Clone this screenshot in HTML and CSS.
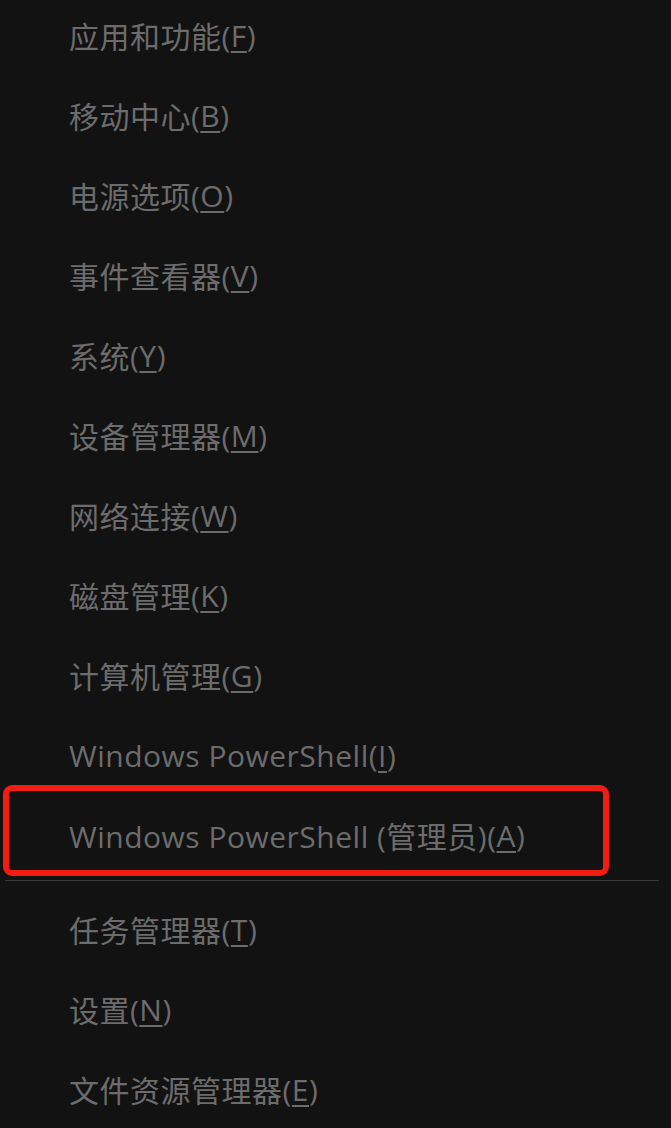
FILE: index.html
```html
<!DOCTYPE html>
<html lang="zh-CN">
<head>
<meta charset="utf-8">
<title>Menu</title>
<link rel="stylesheet" href="styles.css">
</head>
<body>
<div class="menu">
  <div class="group">
    <div class="item">应用和功能(<u>F</u>)</div>
    <div class="item">移动中心(<u>B</u>)</div>
    <div class="item">电源选项(<u>O</u>)</div>
    <div class="item">事件查看器(<u>V</u>)</div>
    <div class="item">系统(<u>Y</u>)</div>
    <div class="item">设备管理器(<u>M</u>)</div>
    <div class="item">网络连接(<u>W</u>)</div>
    <div class="item">磁盘管理(<u>K</u>)</div>
    <div class="item">计算机管理(<u>G</u>)</div>
    <div class="item">Windows PowerShell(<u>I</u>)</div>
    <div class="item highlighted">Windows PowerShell (管理员)(<u>A</u>)<span class="mark"></span></div>
  </div>
  <div class="separator"></div>
  <div class="group">
    <div class="item">任务管理器(<u>T</u>)</div>
    <div class="item">设置(<u>N</u>)</div>
    <div class="item">文件资源管理器(<u>E</u>)</div>
  </div>
</div>
</body>
</html>
```

FILE: styles.css
```css
html, body {
  margin: 0;
  padding: 0;
  background: #121212;
}

body {
  height: 1128px;
  overflow: hidden;
}

.menu {
  margin-top: -5px;
  display: flex;
  flex-direction: column;
}

.group {
  display: flex;
  flex-direction: column;
}

.item {
  position: relative;
  height: 80px;
  display: flex;
  align-items: center;
  padding-left: 69px;
  font-family: "Open Sans", "Noto Sans CJK SC", sans-serif;
  font-size: 30px;
  letter-spacing: 0.5px;
  color: #6c6c6c;
  white-space: nowrap;
}

.item u {
  text-decoration: underline;
  text-decoration-thickness: 2px;
  text-underline-offset: 4px;
}

.mark {
  position: absolute;
  left: 3px;
  top: -10px;
  width: 594px;
  height: 79px;
  border: 6px solid #f11c12;
  border-radius: 9px;
}

.separator {
  margin: 5px 12px 8px 5px;
  height: 1px;
  background: #3a3a3a;
}
```
